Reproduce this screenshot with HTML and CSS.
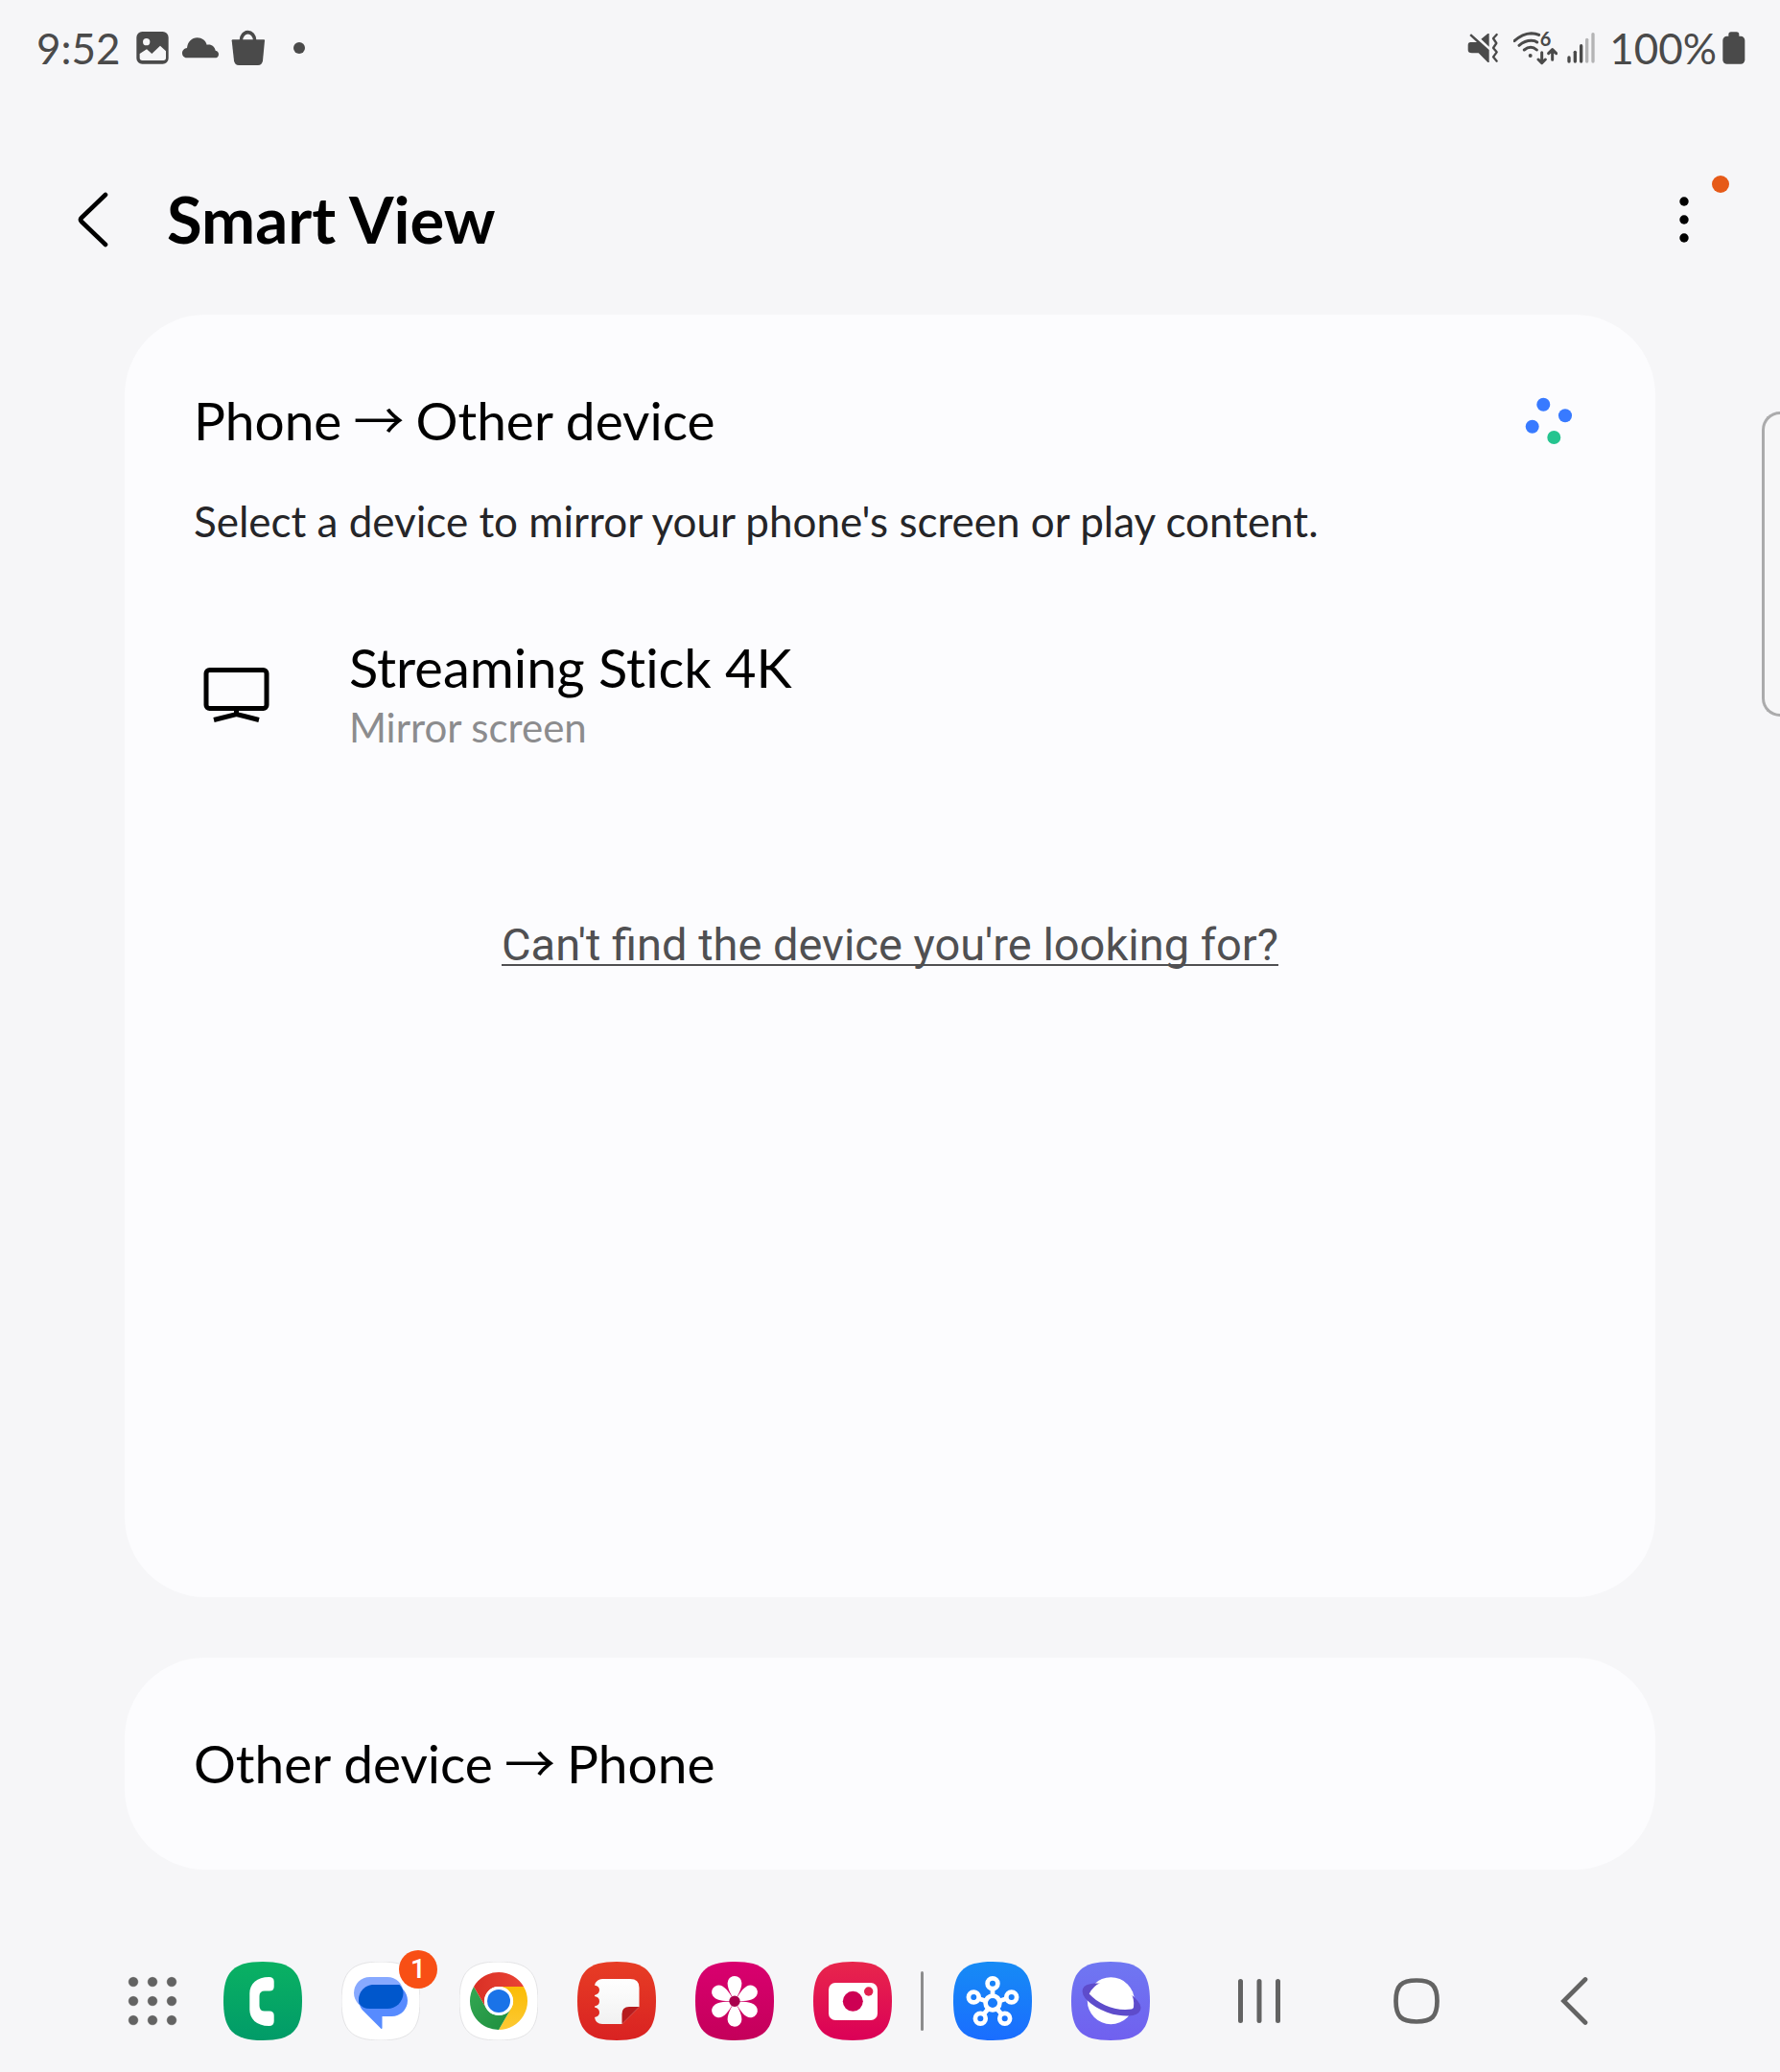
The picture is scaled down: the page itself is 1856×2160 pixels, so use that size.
FILE: index.html
```html
<!DOCTYPE html>
<html lang="en">
<head>
<meta charset="utf-8">
<meta name="viewport" content="width=device-width, initial-scale=1">
<title>Smart View</title>
<link rel="stylesheet" href="styles.css">
</head>
<body>
<div class="status-bar">
  <div class="status-group">
    <time class="status-text">9:52</time>
    <svg class="status-image" width="34" height="34" viewBox="426 99 102 102" aria-hidden="true">
      <rect class="ink" x="427" y="99" width="100" height="101" rx="18"/>
      <circle class="paper" cx="458" cy="131" r="11"/>
      <path class="paper" d="M437 168L459 154L475 168L501 143L519 160V181Q519 189 511 189H445Q437 189 437 181Z"/>
    </svg>
    <svg class="status-cloud" width="38" height="22" viewBox="570 113 114 66" aria-hidden="true">
      <path class="ink" d="M584 177C575 177 570 170 570 162C570 153 577 147 585 146C587 127 600 114 617 114C632 114 643 123 647 136C661 133 672 142 674 154C681 155 684 160 684 166C684 173 679 177 672 177Z"/>
    </svg>
    <svg class="status-bag" width="36" height="38" viewBox="724 93 108 114" aria-hidden="true">
      <path class="ink" d="M729 124H827Q829 124 829 127L823 190Q821 204 808 204H748Q735 204 733 190L726 127Q726 124 729 124Z"/>
      <path class="ink-line" stroke-width="11" d="M755 128C755 92 798 92 798 128"/>
    </svg>
    <svg class="status-dot" width="12" height="12" viewBox="0 0 12 12" aria-hidden="true"><circle class="ink" cx="6" cy="6" r="6"/></svg>
  </div>
  <div class="status-group">
    <svg width="34" height="34" viewBox="90 99 102 102" aria-hidden="true">
      <path class="ink" d="M100 132H120L97 111L102 106L158 156V195H154L125 166H104Q92 166 92 156V142Q92 132 100 132ZM133 122L154 105H158V146Z"/>
      <path class="ink-line" stroke-width="7" stroke-linecap="round" stroke-linejoin="round" d="M182 108L171 120L181 135L171 150L182 163L171 178L182 191"/>
    </svg>
    <svg class="status-wifi" width="46" height="48" viewBox="234 80 138 144" aria-hidden="true">
      <g class="ink-line" stroke-width="9" stroke-linecap="round" stroke-linejoin="round">
        <path d="M237 130Q262 107 290 106Q304 106 314 111M252 144Q270 129 290 129Q302 129 308 134M268 158Q278 150 288 150Q298 150 307 158"/>
        <path d="M323 166V197M312 188L323 199L334 188M356 189V158M344 169L356 157L368 169"/>
      </g>
      <circle class="ink" cx="287" cy="176" r="6"/>
      <text class="wifi-text" x="317" y="147">6</text>
    </svg>
    <svg class="status-signal" width="30" height="34" viewBox="403 99 90 102" aria-hidden="true">
      <g class="ink"><rect x="404" y="175" width="10" height="22" rx="5"/><rect x="423" y="158" width="10" height="39" rx="5"/><rect x="442" y="138" width="10" height="59" rx="5"/></g>
      <g fill="#b4b4b5"><rect x="460" y="119" width="10" height="78" rx="5"/><rect x="479" y="102" width="10" height="95" rx="5"/></g>
    </svg>
    <span class="status-text status-percent">100%</span>
    <svg class="status-battery" width="24" height="34" viewBox="887 97 72 102" aria-hidden="true">
      <rect class="ink" x="906" y="98" width="33" height="30" rx="8"/>
      <rect class="ink" x="888" y="111" width="69" height="87" rx="13"/>
    </svg>
  </div>
</div>

<header class="app-bar">
  <button class="icon-button back-button" type="button" aria-label="Navigate up">
    <svg width="36" height="60" viewBox="0 0 36 60"><path d="M30 4L5 28Q3 30 5 32L30 56" fill="none" stroke="#000" stroke-width="4.6" stroke-linecap="round"/></svg>
  </button>
  <h1 class="app-title">Smart View</h1>
  <button class="icon-button more-button" type="button" aria-label="More options">
    <svg width="12" height="52" viewBox="0 0 12 52"><circle cx="6" cy="7" r="4.7"/><circle cx="6" cy="26" r="4.7"/><circle cx="6" cy="45" r="4.7"/></svg>
    <span class="more-badge"></span>
  </button>
</header>

<main class="content">
  <section class="card card-devices">
    <div class="card-head">
      <h2 class="card-title">Phone <span class="arrow">→</span> Other device</h2>
      <svg class="spinner" width="50" height="50" viewBox="0 0 50 50" role="img" aria-label="Searching">
        <g fill="#387aff"><circle cx="19.3" cy="7.7" r="7"/><circle cx="42" cy="19.3" r="7"/><circle cx="7.7" cy="30.7" r="7"/></g>
        <circle cx="30.3" cy="42" r="7" fill="#25c48f"/>
      </svg>
    </div>
    <p class="card-text">Select a device to mirror your phone's screen or play content.</p>
    <button class="device" type="button">
      <svg class="device-icon" width="90" height="64" viewBox="0 0 90 64" aria-hidden="true">
        <rect x="13" y="4.500" width="63" height="40" rx="3.5" fill="none" stroke="#000" stroke-width="5"/>
        <path d="M44.500 46V51M21 56.500L44.500 50.500L68 56.500" fill="none" stroke="#000" stroke-width="5"/>
      </svg>
      <span class="device-body">
        <span class="device-name">Streaming Stick 4K</span>
        <span class="device-action">Mirror screen</span>
      </span>
    </button>
    <a class="help-link" href="#help">Can't find the device you're looking for?</a>
  </section>
  <section class="card card-receive">
    <h2 class="card-title">Other device <span class="arrow">→</span> Phone</h2>
  </section>
</main>

<div class="edge-handle"></div>

<nav class="taskbar" aria-label="Taskbar">
  <div class="dock">
    <button class="icon-button grid-button" type="button" aria-label="All apps">
      <svg width="58" height="58" viewBox="0 0 58 58" fill="#636363" stroke="#fff" stroke-opacity=".4" stroke-width="1">
        <circle cx="9" cy="9" r="5.300"/><circle cx="29" cy="9" r="5.300"/><circle cx="49" cy="9" r="5.300"/>
        <circle cx="9" cy="29" r="5.300"/><circle cx="29" cy="29" r="5.300"/><circle cx="49" cy="29" r="5.300"/>
        <circle cx="9" cy="49" r="5.300"/><circle cx="29" cy="49" r="5.300"/><circle cx="49" cy="49" r="5.300"/>
      </svg>
    </button>
    <div class="apps">
      <button class="icon-button" type="button" aria-label="Phone">
        <svg width="82" height="82" viewBox="0 0 82 82">
          <defs>
            <path id="tile" d="M41 0C71.500 0 82 10.500 82 41S71.500 82 41 82 0 71.500 0 41 10.500 0 41 0Z"/>
            <linearGradient id="green" x2="0" y2="1"><stop stop-color="#0ab163"/><stop offset="1" stop-color="#019b68"/></linearGradient>
          </defs>
          <use href="#tile" fill="url(#green)"/>
          <path fill="#fff" d="M47.500 16Q52.700 16 52.700 20.500V26Q52.700 30.500 48 30.500H43Q37.500 30.500 37.500 36V46Q37.500 51.500 43 51.500H48Q52.700 51.500 52.700 56V62Q52.700 67 47.500 67C34 67 27.300 59 27.300 50V33C27.300 23 35 16 47.500 16Z"/>
        </svg>
      </button>
      <button class="icon-button app-badged" type="button" aria-label="Messages, 1 unread">
        <svg width="82" height="82" viewBox="0 0 82 82">
          <use href="#tile" fill="#fff" stroke="#e4e4e6"/>
          <rect x="13" y="16" width="51.500" height="33" rx="16.500" fill="#87a9ff"/>
          <path fill="#578bff" d="M34 24H52.500A16.500 16.500 0 0 1 52.500 57H42.500V69.500Q41.500 70.500 40.500 69L22 50.500C15 42 18 24 34 24Z"/>
          <path fill="#0057cc" d="M34 24H60.500Q64.500 28 64.500 32.500A16.500 16.500 0 0 1 48 49H29.500Q22 49 18.500 43.500C16 34 23 24 34 24Z"/>
        </svg>
        <span class="app-count">1</span>
      </button>
      <button class="icon-button" type="button" aria-label="Chrome">
        <svg width="82" height="82" viewBox="0 0 82 82">
          <defs>
            <linearGradient id="c-red"><stop stop-color="#d93025"/><stop offset="1" stop-color="#ea4335"/></linearGradient>
            <linearGradient id="c-green" x1="1" y1="1" x2="0" y2="0"><stop stop-color="#1e8e3e"/><stop offset="1" stop-color="#34a853"/></linearGradient>
            <linearGradient id="c-yellow" x2="0" y1="1" y2="0"><stop stop-color="#fcc934"/><stop offset="1" stop-color="#fbbc04"/></linearGradient>
          </defs>
          <use href="#tile" fill="#fff" stroke="#e4e4e6"/>
          <path fill="url(#c-yellow)" d="M41 26H67A30 30 0 0 1 41 71L54 48.500A15 15 0 0 0 41 26Z"/>
          <path fill="url(#c-green)" d="M41 71A30 30 0 0 1 15 26L28 48.500A15 15 0 0 0 54 48.500Z"/>
          <path fill="url(#c-red)" d="M15 26A30 30 0 0 1 67 26H41A15 15 0 0 0 28 48.500Z"/>
          <circle cx="41" cy="41" r="15" fill="#fff"/>
          <circle cx="41" cy="41" r="12" fill="#1a73e8"/>
        </svg>
      </button>
      <button class="icon-button" type="button" aria-label="Notes">
        <svg width="82" height="82" viewBox="0 0 82 82">
          <defs>
            <linearGradient id="red" x2="0" y2="1"><stop stop-color="#e73d25"/><stop offset="1" stop-color="#d92222"/></linearGradient>
            <linearGradient id="sheet" x2="0" y2="1"><stop stop-color="#fff"/><stop offset="1" stop-color="#f1f1f1"/></linearGradient>
          </defs>
          <use href="#tile" fill="url(#red)"/>
          <path fill="url(#sheet)" d="M26 18H55Q64.500 18 64.500 27V47L46.500 65H26Q19 65 18 58Q23 57 23 53Q23 48.500 18 47.500V46.500Q23 45.500 23 41.200Q23 37 18 36V35Q23 33.500 23 29.500Q23 25.500 18 24.500Q20 18 26 18Z"/>
          <path fill="#b71c1e" d="M64.500 47H54Q46.500 47 46.500 54.500V65Z"/>
        </svg>
      </button>
      <button class="icon-button" type="button" aria-label="Gallery">
        <svg width="82" height="82" viewBox="0 0 82 82">
          <defs>
            <linearGradient id="pink" x2="0" y2="1"><stop stop-color="#d9006f"/><stop offset="1" stop-color="#c4005a"/></linearGradient>
            <path id="petal" d="M0 0L-4.200-8C-6-12-7.400-15-7.400-19A7.400 7.400 0 0 1 7.400-19C7.400-15 6-12 4.200-8Z"/>
          </defs>
          <use href="#tile" fill="url(#pink)"/>
          <g fill="#fff" transform="translate(41 41.300)">
            <use href="#petal"/><use href="#petal" transform="rotate(60)"/><use href="#petal" transform="rotate(120)"/>
            <use href="#petal" transform="rotate(180)"/><use href="#petal" transform="rotate(240)"/><use href="#petal" transform="rotate(300)"/>
          </g>
          <circle cx="41" cy="41.300" r="5.700" fill="#a9004d"/>
        </svg>
      </button>
      <button class="icon-button" type="button" aria-label="Camera">
        <svg width="82" height="82" viewBox="0 0 82 82">
          <defs><linearGradient id="rose" x2="0" y2="1"><stop stop-color="#e8264c"/><stop offset="1" stop-color="#db0057"/></linearGradient></defs>
          <use href="#tile" fill="url(#rose)"/>
          <rect x="16" y="22" width="51" height="39" rx="7" fill="#fff"/>
          <circle cx="41.300" cy="41.300" r="10.500" fill="#cd0053"/>
          <circle cx="57.700" cy="31" r="4.700" fill="#e2204f"/>
        </svg>
      </button>
    </div>
    <span class="dock-divider"></span>
    <div class="apps">
      <button class="icon-button" type="button" aria-label="Quick Share">
        <svg width="82" height="82" viewBox="0 0 82 82">
          <defs><linearGradient id="blue" x2="0" y2="1"><stop stop-color="#168bf5"/><stop offset="1" stop-color="#1a6dff"/></linearGradient></defs>
          <use href="#tile" fill="url(#blue)"/>
          <g fill="none" stroke="#fff" stroke-width="4.700">
            <circle cx="41" cy="43" r="7.400"/><circle cx="41" cy="22.700" r="5.400"/><circle cx="21.300" cy="37" r="5.400"/>
            <circle cx="60.700" cy="37" r="5.400"/><circle cx="28.300" cy="59.300" r="5.400"/><circle cx="53.700" cy="59.300" r="5.400"/>
            <path d="M41 28V36M26.500 38.500L34 41M55.500 38.500L48 41M31.500 55L36.500 49M50.500 55L45.500 49"/>
          </g>
        </svg>
      </button>
      <button class="icon-button" type="button" aria-label="Internet">
        <svg width="82" height="82" viewBox="0 0 82 82">
          <defs><linearGradient id="violet" x2="0" y2="1"><stop stop-color="#6f77f2"/><stop offset="1" stop-color="#7060ef"/></linearGradient></defs>
          <use href="#tile" fill="url(#violet)"/>
          <circle cx="41.300" cy="40.700" r="24.500" fill="#fff"/>
          <ellipse cx="42" cy="39.500" rx="32" ry="14" transform="rotate(20 42 39.500)" fill="#5e4ccb"/>
          <path fill="#fff" d="M18.700 33.500A24.500 24.500 0 0 1 65 47.500Q64.500 49.300 62.500 49.500C46 52 28 44 18.700 33.500Z"/>
        </svg>
      </button>
    </div>
  </div>
  <div class="keys">
    <button class="icon-button key" type="button" aria-label="Recents">
      <svg width="50" height="50" viewBox="0 0 50 50" fill="none" stroke="#636363" stroke-width="5" stroke-linecap="round"><path d="M5.500 4.500V45.500M25 4.500V45.500M44.500 4.500V45.500"/></svg>
    </button>
    <button class="icon-button key" type="button" aria-label="Home">
      <svg width="50" height="50" viewBox="0 0 50 50" fill="none" stroke="#636363" stroke-width="4.700"><path d="M25 3.500C41 3.500 46.500 9 46.500 25S41 46.500 25 46.500 3.500 41 3.500 25 9 3.500 25 3.500Z"/></svg>
    </button>
    <button class="icon-button key" type="button" aria-label="Back">
      <svg width="50" height="50" viewBox="0 0 50 50" fill="none" stroke="#636363" stroke-width="4.700" stroke-linecap="round"><path d="M37 2.500L14.500 25L37 47.500"/></svg>
    </button>
  </div>
</nav>
</body>
</html>
```
FILE: styles.css
```css
* {
  box-sizing: border-box;
}

body {
  margin: 0;
  min-height: 100vh;
  display: flex;
  flex-direction: column;
  position: relative;
  background: #f6f6f8;
  color: #000;
  font-family: Lato, "Open Sans", sans-serif;
  font-variant-ligatures: none;
}

h1,
h2,
p {
  margin: 0;
  font-weight: 400;
}

button {
  font: inherit;
  font-variant-ligatures: none;
  color: inherit;
  background: none;
  border: 0;
  padding: 0;
  text-align: left;
}

svg {
  display: block;
  flex: none;
}

.ink {
  fill: #4a4a4a;
}

.ink-line {
  fill: none;
  stroke: #4a4a4a;
}

.paper {
  fill: #f6f6f8;
}

/* Status bar */

.status-bar {
  height: 100px;
  padding: 0 36px 0 38px;
  display: flex;
  align-items: center;
  justify-content: space-between;
}

.status-group {
  display: flex;
  align-items: center;
}

.status-text {
  font-size: 44px;
  line-height: 48px;
  color: #4a4a4a;
}

.status-image {
  margin-left: 16px;
}

.status-cloud {
  margin-left: 14px;
}

.status-bag {
  margin-left: 13px;
}

.status-dot {
  margin-left: 29px;
}

.status-wifi {
  margin-left: 14px;
}

.wifi-text {
  font-size: 60px;
  font-weight: 700;
  fill: #4a4a4a;
}

.status-signal {
  margin-left: 10px;
}

.status-percent {
  margin-left: 14px;
}

.status-battery {
  margin-left: 6px;
}

/* App bar */

.app-bar {
  height: 228px;
  padding: 30px 62px 0 80px;
  display: flex;
  align-items: center;
}

.icon-button {
  display: flex;
  align-items: center;
  justify-content: center;
}

.back-button {
  width: 94px;
  height: 96px;
  justify-content: flex-start;
}

.app-title {
  flex: 1;
  font-size: 67px;
  line-height: 78px;
  padding-bottom: 2px;
  font-weight: 700;
}

.more-button {
  position: relative;
  width: 76px;
  height: 96px;
}

.more-badge {
  position: absolute;
  top: 2px;
  right: -9px;
  width: 18px;
  height: 18px;
  border-radius: 50%;
  background: #e65a18;
}

/* Cards */

.content {
  flex: 1;
  display: flex;
  flex-direction: column;
  gap: 63px;
  padding: 0 7% 63px;
}

.card {
  background: #fcfcfe;
  border-radius: 84px;
  padding: 80px 72px;
}

.card-devices {
  flex: 1;
  display: flex;
  flex-direction: column;
}

.card-head {
  display: flex;
  align-items: center;
  justify-content: space-between;
}

.card-title {
  height: 61px;
  font-size: 55px;
  line-height: 60px;
}

.arrow {
  margin: 0 -2px;
  font-family: "Noto Sans CJK JP", sans-serif;
  font-size: 53px;
  line-height: 1;
}

.spinner {
  margin-right: 14px;
}

.card-text {
  margin-top: 46px;
  font-size: 44px;
  line-height: 56px;
  color: #252528;
}

.device {
  margin-top: 93px;
  display: flex;
  align-items: center;
  gap: 72px;
}

.device-body {
  display: flex;
  flex-direction: column;
}

.device-name {
  font-size: 56px;
  line-height: 64px;
}

.device-action {
  font-size: 42px;
  line-height: 60px;
  color: #8c8c8e;
}

.help-link {
  align-self: center;
  margin-top: 169px;
  font-family: Roboto, sans-serif;
  font-variant-ligatures: normal;
  font-size: 47px;
  line-height: 56px;
  color: #505052;
  text-decoration-thickness: 2px;
  text-underline-offset: 4px;
  text-decoration-skip-ink: none;
}

.edge-handle {
  position: absolute;
  top: 429px;
  right: 0;
  width: 19px;
  height: 318px;
  border: 3px solid #ababac;
  border-right: 0;
  border-radius: 20px 0 0 20px;
  background: #f7f7f8;
}

/* Taskbar */

.taskbar {
  height: 148px;
  padding: 0 7%;
  display: flex;
  align-items: center;
  justify-content: space-between;
}

.dock {
  display: flex;
  align-items: center;
}

.grid-button {
  margin-right: 45px;
}

.apps {
  display: flex;
  gap: 41px;
}

.app-badged {
  position: relative;
}

.app-count {
  position: absolute;
  top: -12px;
  right: -18px;
  width: 40px;
  height: 40px;
  border-radius: 50%;
  background: #f84f15;
  color: #fff;
  font-family: Roboto, sans-serif;
  font-size: 28px;
  font-weight: 500;
  line-height: 40px;
  text-align: center;
}

.dock-divider {
  width: 3px;
  height: 62px;
  margin: 0 31px 0 30px;
  border-radius: 2px;
  background: #8c8c8d;
}

.keys {
  display: flex;
}

.key {
  width: 164px;
  height: 96px;
  padding-right: 6px;
}
```
